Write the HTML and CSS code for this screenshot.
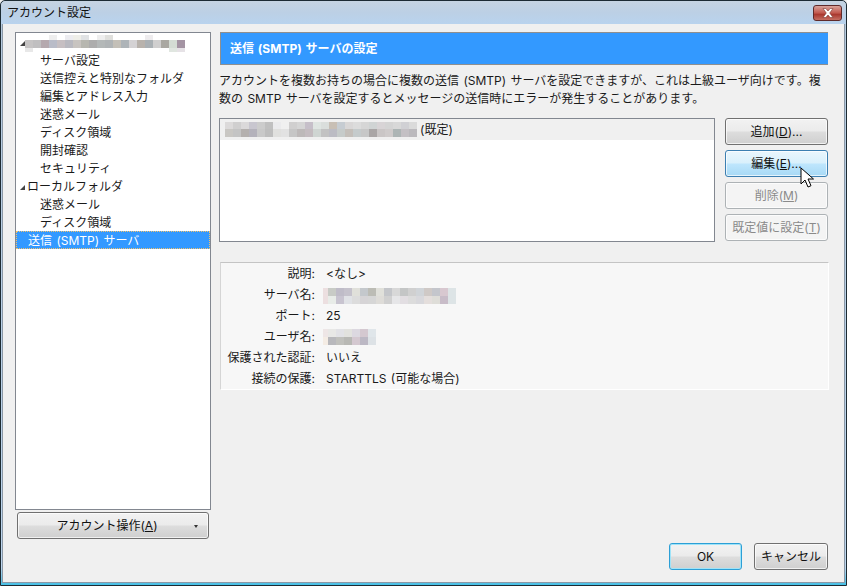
FILE: index.html
```html
<!DOCTYPE html>
<html lang="ja">
<head>
<meta charset="utf-8">
<title>アカウント設定</title>
<link rel="stylesheet" href="styles.css">
</head>
<body>
<div class="window">
  <header class="titlebar">
    <span class="title">アカウント設定</span>
    <button class="close" aria-label="閉じる">
      <svg width="14" height="10" viewBox="0 0 14 10"><path d="M2 0.500h2.800L7 3l2.200-2.500H12L8.700 5 12 9.500H9.200L7 7 4.800 9.500H2L5.300 5z" fill="#fff" stroke="#7c3a34" stroke-width=".6"/></svg>
    </button>
  </header>
  <div class="client">
    <div class="main">
      <aside class="side">
        <div class="tree">
          <div class="row top">
            <span class="tri"></span>
            <svg class="blur blur-account" width="160" height="17" viewBox="0 0 160 17" shape-rendering="crispEdges">
              <g>
                <rect x="24" y="0" width="8" height="5" fill="#eeeeee"/><rect x="40" y="0" width="8" height="5" fill="#ececf0"/><rect x="48" y="0" width="8" height="5" fill="#eeeee8"/><rect x="56" y="0" width="8" height="5" fill="#e0e2e4"/><rect x="72" y="0" width="8" height="5" fill="#eeeeee"/><rect x="80" y="0" width="8" height="5" fill="#dfdfdc"/><rect x="120" y="0" width="8" height="5" fill="#eeecee"/>
                <rect x="0" y="5" width="8" height="8" fill="#c6c4c4"/><rect x="8" y="5" width="8" height="8" fill="#c0bfc0"/><rect x="16" y="5" width="8" height="8" fill="#b5a9ae"/><rect x="24" y="5" width="8" height="8" fill="#b9bcc8"/><rect x="32" y="5" width="8" height="8" fill="#c6bfc2"/><rect x="40" y="5" width="8" height="8" fill="#b9b9c0"/><rect x="48" y="5" width="8" height="8" fill="#c8c4c0"/><rect x="56" y="5" width="8" height="8" fill="#b7b7b0"/><rect x="64" y="5" width="8" height="8" fill="#adadad"/><rect x="72" y="5" width="8" height="8" fill="#b4b8b8"/><rect x="80" y="5" width="8" height="8" fill="#b0b4b6"/><rect x="88" y="5" width="8" height="8" fill="#c4c0b8"/><rect x="96" y="5" width="8" height="8" fill="#aeb4b8"/><rect x="104" y="5" width="8" height="8" fill="#d4d2d4"/><rect x="112" y="5" width="8" height="8" fill="#b8b2ac"/><rect x="120" y="5" width="8" height="8" fill="#aab0b4"/><rect x="128" y="5" width="8" height="8" fill="#d0cfcf"/><rect x="136" y="5" width="8" height="8" fill="#aaa8a2"/><rect x="144" y="5" width="8" height="8" fill="#d4dcd4"/><rect x="152" y="5" width="8" height="8" fill="#a494a3"/>
                <rect x="0" y="13" width="8" height="4" fill="#e8e8e8"/><rect x="144" y="13" width="8" height="4" fill="#e0e6e0"/><rect x="152" y="13" width="8" height="4" fill="#e6e2e6"/>
              </g>
            </svg>
          </div>
          <div class="row sub">サーバ設定</div>
          <div class="row sub">送信控えと特別なフォルダ</div>
          <div class="row sub">編集とアドレス入力</div>
          <div class="row sub">迷惑メール</div>
          <div class="row sub">ディスク領域</div>
          <div class="row sub">開封確認</div>
          <div class="row sub">セキュリティ</div>
          <div class="row top"><span class="tri"></span>ローカルフォルダ</div>
          <div class="row sub">迷惑メール</div>
          <div class="row sub">ディスク領域</div>
          <div class="row selected">送信 (SMTP) サーバ</div>
        </div>
        <button class="btn account"><span class="account-label">アカウント操作(<u>A</u>)</span><span class="drop"></span></button>
      </aside>
      <section class="pane">
        <h1 class="heading">送信 (SMTP) サーバの設定</h1>
        <p class="desc">アカウントを複数お持ちの場合に複数の送信 (SMTP) サーバを設定できますが、これは上級ユーザ向けです。複数の SMTP サーバを設定するとメッセージの送信時にエラーが発生することがあります。</p>
        <div class="servers">
          <div class="list">
            <div class="list-item">
              <svg class="blur" width="192" height="15" viewBox="0 0 192 15" shape-rendering="crispEdges">
                <rect width="8" height="7" x="0" fill="#dcdada"/><rect width="8" height="7" x="8" fill="#d0cfcf"/><rect width="8" height="7" x="16" fill="#dbd9da"/><rect width="8" height="7" x="24" fill="#c8c6cf"/><rect width="8" height="7" x="32" fill="#cccccc"/><rect width="8" height="7" x="40" fill="#c0c0c0"/><rect width="8" height="7" x="48" fill="#ebebed"/><rect width="8" height="7" x="56" fill="#f0f0f0"/><rect width="8" height="7" x="64" fill="#d0cfcf"/><rect width="8" height="7" x="72" fill="#d5d5d5"/><rect width="8" height="7" x="80" fill="#c6bfc9"/><rect width="8" height="7" x="88" fill="#dfe5e2"/><rect width="8" height="7" x="96" fill="#dadedc"/><rect width="8" height="7" x="104" fill="#c8bfb5"/><rect width="8" height="7" x="112" fill="#c6ccd2"/><rect width="8" height="7" x="120" fill="#d9d7d7"/><rect width="8" height="7" x="128" fill="#dcdcdc"/><rect width="8" height="7" x="136" fill="#d6d6d6"/><rect width="8" height="7" x="144" fill="#d0d4d4"/><rect width="8" height="7" x="152" fill="#d8d4d6"/><rect width="8" height="7" x="160" fill="#d4d4d4"/><rect width="8" height="7" x="168" fill="#d8d8d8"/><rect width="8" height="7" x="176" fill="#d0d0d4"/><rect width="8" height="7" x="184" fill="#dadada"/>
                <rect width="8" height="8" y="7" x="0" fill="#c9c7c3"/><rect width="8" height="8" y="7" x="8" fill="#c4c4c4"/><rect width="8" height="8" y="7" x="16" fill="#b4b0ae"/><rect width="8" height="8" y="7" x="24" fill="#b4b2bb"/><rect width="8" height="8" y="7" x="32" fill="#c9c9c9"/><rect width="8" height="8" y="7" x="40" fill="#bebebe"/><rect width="8" height="8" y="7" x="48" fill="#e0e0de"/><rect width="8" height="8" y="7" x="56" fill="#e2e2e2"/><rect width="8" height="8" y="7" x="64" fill="#c6c6c6"/><rect width="8" height="8" y="7" x="72" fill="#bdb9b9"/><rect width="8" height="8" y="7" x="80" fill="#c4bcc0"/><rect width="8" height="8" y="7" x="88" fill="#cfd5d2"/><rect width="8" height="8" y="7" x="96" fill="#c2c2c2"/><rect width="8" height="8" y="7" x="104" fill="#bcbcc4"/><rect width="8" height="8" y="7" x="112" fill="#c6cbca"/><rect width="8" height="8" y="7" x="120" fill="#c4bfba"/><rect width="8" height="8" y="7" x="128" fill="#c5cbcc"/><rect width="8" height="8" y="7" x="136" fill="#c7c7c7"/><rect width="8" height="8" y="7" x="144" fill="#aaa6a6"/><rect width="8" height="8" y="7" x="152" fill="#cac6c6"/><rect width="8" height="8" y="7" x="160" fill="#cfcbcb"/><rect width="8" height="8" y="7" x="168" fill="#adb5b5"/><rect width="8" height="8" y="7" x="176" fill="#c4c0c4"/><rect width="8" height="8" y="7" x="184" fill="#bbb9bd"/>
              </svg>
              <span class="default-tag">(既定)</span>
            </div>
          </div>
          <div class="actions">
            <button class="btn">追加(<u>D</u>)...</button>
            <button class="btn hover">編集(<u>E</u>)...</button>
            <button class="btn disabled">削除(<u>M</u>)</button>
            <button class="btn disabled">既定値に設定(<u>T</u>)</button>
          </div>
        </div>
        <dl class="details">
          <dt>説明:</dt><dd>&lt;なし&gt;</dd>
          <dt>サーバ名:</dt><dd><svg class="blur blur-server" width="133" height="16" viewBox="0 0 133 16" shape-rendering="crispEdges">
            <rect width="5" height="8" fill="#ecdfe0"/><rect x="5" width="8" height="8" fill="#c8cbc6"/><rect x="13" width="8" height="8" fill="#bfbcc8"/><rect x="21" width="8" height="8" fill="#c5c2cc"/><rect x="29" width="8" height="8" fill="#e0e0da"/><rect x="37" width="8" height="8" fill="#c4c8cc"/><rect x="45" width="8" height="8" fill="#bcbcb5"/><rect x="53" width="8" height="8" fill="#e0e0da"/><rect x="61" width="8" height="8" fill="#c4c6ca"/><rect x="69" width="8" height="8" fill="#d8d8d8"/><rect x="77" width="8" height="8" fill="#c4c6c6"/><rect x="85" width="8" height="8" fill="#d0d0d0"/><rect x="93" width="8" height="8" fill="#d0d4d8"/><rect x="101" width="8" height="8" fill="#cfc9c6"/><rect x="109" width="8" height="8" fill="#c4c6cc"/><rect x="117" width="8" height="8" fill="#d8c8d0"/><rect x="125" width="8" height="8" fill="#dde4e6"/>
            <rect y="8" width="5" height="8" fill="#ecdfe0"/><rect y="8" x="5" width="8" height="8" fill="#e8ece8"/><rect y="8" x="13" width="8" height="8" fill="#c8c4d0"/><rect y="8" x="21" width="8" height="8" fill="#e0e2e6"/><rect y="8" x="29" width="8" height="8" fill="#dcdcdc"/><rect y="8" x="37" width="8" height="8" fill="#d6d4d6"/><rect y="8" x="45" width="8" height="8" fill="#d6d6d6"/><rect y="8" x="53" width="8" height="8" fill="#dedcd8"/><rect y="8" x="61" width="8" height="8" fill="#d0d0d0"/><rect y="8" x="69" width="8" height="8" fill="#e6e6e8"/><rect y="8" x="77" width="8" height="8" fill="#e2dee2"/><rect y="8" x="85" width="8" height="8" fill="#dcdcdc"/><rect y="8" x="93" width="8" height="8" fill="#d8d8dc"/><rect y="8" x="101" width="8" height="8" fill="#e4dedc"/><rect y="8" x="109" width="8" height="8" fill="#deddd8"/><rect y="8" x="117" width="8" height="8" fill="#c8bcc8"/><rect y="8" x="125" width="8" height="8" fill="#dde4e6"/>
          </svg></dd>
          <dt>ポート:</dt><dd>25</dd>
          <dt>ユーザ名:</dt><dd><svg class="blur" width="53" height="16" viewBox="0 0 53 16" shape-rendering="crispEdges">
            <rect width="5" height="8" fill="#eee6e6"/><rect x="5" width="8" height="8" fill="#e8e8e6"/><rect x="13" width="8" height="8" fill="#e2e2e6"/><rect x="21" width="8" height="8" fill="#e2e2de"/><rect x="29" width="8" height="8" fill="#dcd8e0"/><rect x="37" width="8" height="8" fill="#d4c8d0"/><rect x="45" width="8" height="8" fill="#e0e6ea"/>
            <rect y="8" width="5" height="8" fill="#f4ece4"/><rect y="8" x="5" width="8" height="8" fill="#b8b8bc"/><rect y="8" x="13" width="8" height="8" fill="#c0c0bc"/><rect y="8" x="21" width="8" height="8" fill="#b8b8b4"/><rect y="8" x="29" width="8" height="8" fill="#d4c8d0"/><rect y="8" x="37" width="8" height="8" fill="#bcb8c4"/><rect y="8" x="45" width="8" height="8" fill="#dde2e6"/>
          </svg></dd>
          <dt>保護された認証:</dt><dd>いいえ</dd>
          <dt>接続の保護:</dt><dd>STARTTLS (可能な場合)</dd>
        </dl>
      </section>
    </div>
    <footer class="footer">
      <button class="btn ok">OK</button>
      <button class="btn cancel">キャンセル</button>
    </footer>
  </div>
  <svg class="cursor" width="14" height="22" viewBox="0 0 14 22"><path d="M1 1v16l4-4 3 7 3-1.300-3-6.700h5.500z" fill="#fff" stroke="#000"/></svg>
</div>
</body>
</html>
```
FILE: styles.css
```css
* { box-sizing: border-box; }
html, body { margin: 0; padding: 0; }
body {
  width: 847px; height: 586px; overflow: hidden; background: #f0f0f0;
  font: 12px/18px Inter, "Noto Sans CJK JP", sans-serif; color: #1a1a1a; word-spacing: 1px;
}
.window {
  position: relative; width: 847px; height: 586px; display: flex; flex-direction: column;
  border: 1px solid #1d2b33; border-radius: 5px 5px 0 0;
  background: linear-gradient(to bottom, #b4c9de 0, #bcd5ee 97%, #45c0e6 100%);
}
.titlebar {
  flex: none; height: 23px; display: flex; justify-content: space-between; align-items: flex-start;
  padding: 0 7px 0 6px;
  background: linear-gradient(to bottom, #c6d4e2 0, #bcd0e5 50%, #b9d3ee 100%);
  border-radius: 5px 5px 0 0;
}
.title { font-size: 12px; line-height: 24px; color: #111; }
.close {
  width: 29px; height: 16px; margin: 4px -3px 0 0; padding: 0; display: flex; align-items: center; justify-content: center;
  border: 1px solid #5f2a2a; border-radius: 3px;
  background: linear-gradient(to bottom, #d9a39a 0, #c2584e 50%, #a9382f 60%, #c56f63 100%);
}
.client {
  flex: 1; display: flex; flex-direction: column; margin: 0 1px 2px 1px; padding: 8px 16px 12px 12px;
  background: #f0f0f0; border: 1px solid #8b98a6; border-width: 0 1px 1px 1px;
}
.main { flex: 1; display: flex; gap: 8px; min-height: 0; }
.side { flex: none; width: 196px; display: flex; flex-direction: column; gap: 2px; align-items: center; }
.tree { width: 196px; height: 478px; background: #fff; border: 1px solid #828790; }
.row { height: 18px; line-height: 16px; padding-top: 2px; white-space: nowrap; display: flex; align-items: center; }
.row.sub { padding-left: 24px; }
.row.top { padding-left: 4px; }
.row.selected {
  padding-left: 12px; color: #fff; background: #3399ff;
  outline: 1px dotted #f3c16a; outline-offset: -1px;
}
.tri {
  width: 0; height: 0; margin-right: 2px; flex: none;
  border-style: solid; border-width: 0 0 5px 5px; border-color: transparent transparent #444 transparent;
}
.blur { display: block; flex: none; }
.blur-account { margin-left: -2px; }
.blur-server { margin-top: 3px; }
.btn {
  font: inherit; word-spacing: inherit; color: #111; padding: 0; height: 27px; white-space: nowrap;
  border: 1px solid #707070; border-radius: 3px;
  background: linear-gradient(to bottom, #f2f2f2 0, #ebebeb 48%, #dddddd 52%, #cfcfcf 100%);
  box-shadow: inset 0 0 0 1px rgba(255,255,255,.7);
}
.btn u { text-decoration: underline; }
.btn.hover {
  border-color: #3c7fb1;
  background: linear-gradient(to bottom, #eaf6fd 0, #d9f0fc 48%, #bee6fd 52%, #a7d9f5 100%);
}
.btn.disabled {
  color: #8a8a8a; border-color: #adb2b5; background: #f4f4f4;
}
.account { width: 192px; position: relative; padding-right: 12px; display: flex; align-items: center; justify-content: center; }
.drop {
  position: absolute; right: 10px; top: 12px; width: 0; height: 0;
  border-style: solid; border-width: 3px 2.500px 0; border-color: #333 transparent transparent;
}
.pane { flex: 1; min-width: 0; display: flex; flex-direction: column; }
.heading {
  margin: 0 0 0 1px; height: 33px; flex: none; padding-left: 9px; font-size: 12px; font-weight: 700; line-height: 31px;
  color: #fff; background: #3399ff; border: 1px solid #8f8f8f; border-width: 1px 0 1px 1px;
}
.desc { margin: 7px 0 0; height: 36px; line-height: 18px; width: 609px; color: #1a1a1a; }
.servers { display: flex; gap: 10px; margin-top: 10px; }
.list { flex: none; width: 496px; height: 124px; background: #fff; border: 1px solid #828790; }
.list-item { height: 21px; background: #f0f0f0; display: flex; align-items: center; padding-left: 5px; gap: 3px; }
.default-tag { color: #1a1a1a; }
.actions { display: flex; flex-direction: column; gap: 5px; width: 103px; }
.actions .btn { height: 27px; width: 103px; }
.details {
  margin: 20px -1px 0 1px; height: 128px; display: grid; grid-template-columns: 94px 1fr;
  grid-auto-rows: 21px; column-gap: 11px; align-items: center;
  background: #f7f7f7; border-top: 1px solid #c4c4c4; border-left: 1px solid #d5d5d5;
  border-right: 1px solid #fff; border-bottom: 1px solid #fff;
}
.details dt { text-align: right; margin: 0; }
.details dd { margin: 0; }
.details dd .blur { margin-left: -3px; }
.footer { flex: none; height: 27px; margin-top: 4px; display: flex; justify-content: flex-end; gap: 12px; }
.ok { width: 73px; border-color: #2c9fd6; box-shadow: inset 0 0 0 1px #9fe3f8; }
.cancel { width: 74px; }
.cursor { position: absolute; left: 799px; top: 166px; }
```
